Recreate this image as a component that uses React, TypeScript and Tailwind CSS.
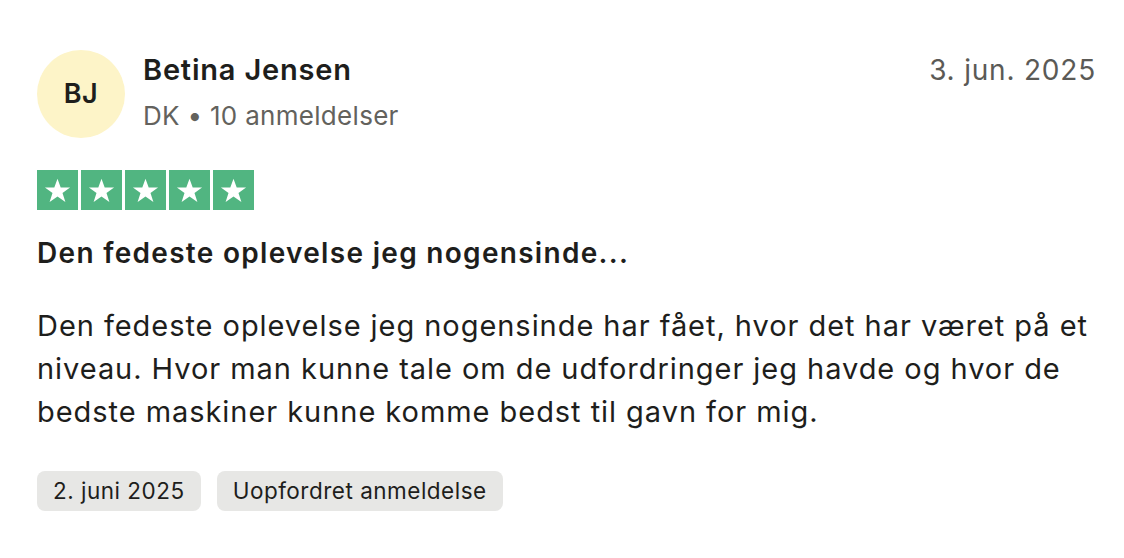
function Star() {
  return (
    <svg viewBox="0 0 24 24" className="h-[29px] w-[29px]" fill="white">
      <path d="M12 2.2l2.65 7.3h7.75l-6.27 4.55 2.4 7.45L12 17 5.47 21.5l2.4-7.45L1.6 9.5h7.75z" />
    </svg>
  );
}

export default function App() {
  return (
    <div
      className="w-[1124px] h-[558px] bg-white text-[#1e1e1c] pl-[37px] pr-[28px] pt-[50px]"
      style={{ fontFamily: 'Inter, "Noto Sans", sans-serif' }}
    >
      {/* Header */}
      <div className="flex items-start">
        <div className="w-[88px] h-[88px] shrink-0 rounded-full bg-[#fdf4c8] flex items-center justify-center text-[27px] font-semibold tracking-[0.5px]">
          BJ
        </div>
        <div className="ml-[18px] pt-[2px] flex-1">
          <div className="text-[29px] font-semibold leading-[36px] tracking-[0.8px]">Betina Jensen</div>
          <div className="text-[26px] text-[#63625d] leading-[36px] mt-[10px] tracking-[0.3px]">
            DK • 10 anmeldelser
          </div>
        </div>
        <div className="text-[28px] text-[#5b5a56] pt-[2px] leading-[36px] tracking-[0.8px]">3. jun. 2025</div>
      </div>

      {/* Stars */}
      <div className="flex gap-[3px] mt-[32px]">
        {[0, 1, 2, 3, 4].map((i) => (
          <div key={i} className="w-[41px] h-[40px] bg-[#51b581] flex items-center justify-center">
            <Star />
          </div>
        ))}
      </div>

      {/* Title */}
      <div className="mt-[25px] text-[28px] font-semibold leading-[36px] tracking-[1.3px]">
        Den fedeste oplevelse jeg nogensinde...
      </div>

      {/* Body */}
      <p className="mt-[33px] text-[29px] leading-[43px] tracking-[0.95px] max-w-[1062px]">
        Den fedeste oplevelse jeg nogensinde har fået, hvor det har været på et niveau. Hvor man
        kunne tale om de udfordringer jeg havde og hvor de bedste maskiner kunne komme bedst til
        gavn for mig.
      </p>

      {/* Tags */}
      <div className="flex gap-[16px] mt-[38px]">
        <span className="h-[40px] px-[16px] rounded-[8px] bg-[#e7e7e5] text-[22.5px] tracking-[0.5px] flex items-center">
          2. juni 2025
        </span>
        <span className="h-[40px] px-[16px] rounded-[8px] bg-[#e7e7e5] text-[22.5px] tracking-[0.5px] flex items-center">
          Uopfordret anmeldelse
        </span>
      </div>
    </div>
  );
}
